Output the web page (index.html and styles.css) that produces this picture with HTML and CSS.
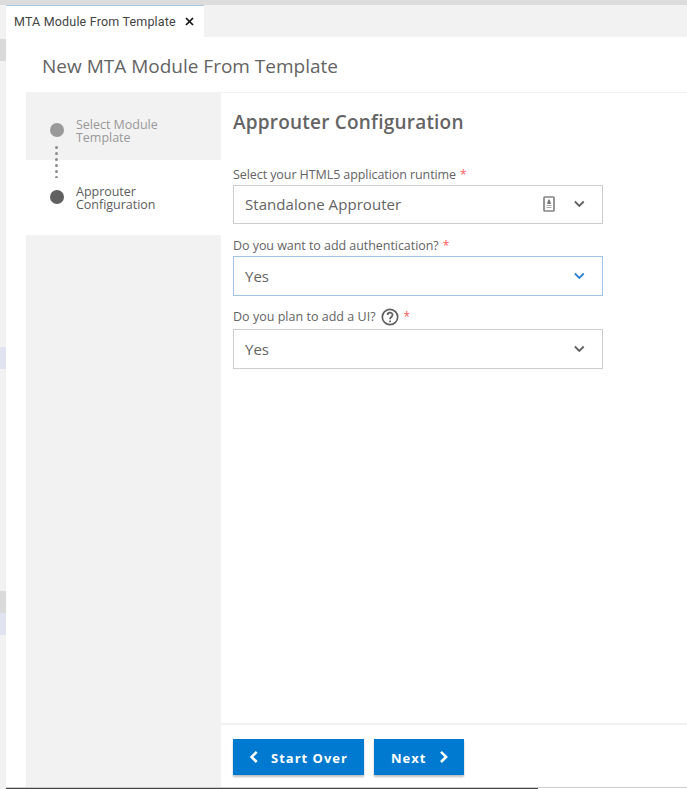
FILE: index.html
```
<!DOCTYPE html>
<html lang="en">
<head>
<meta charset="utf-8">
<title>New MTA Module From Template</title>
<link rel="stylesheet" href="styles.css">
</head>
<body>
<div class="window">
  <div class="top-strip"></div>
  <div class="workbench">
    <div class="gutter"><i class="mark mark-a"></i><i class="mark mark-b"></i><i class="mark mark-c"></i><i class="mark mark-d"></i></div>
    <div class="editor">
      <div class="tabs">
        <div class="tab"><span class="tab-label">MTA Module From Template</span>
          <svg class="close" width="9" height="9" viewBox="0 0 9 9"><path d="M1 1l7 7M8 1l-7 7"/></svg>
        </div>
      </div>
      <h1>New MTA Module From Template</h1>
      <div class="wizard">
        <nav class="steps">
          <div class="step done"><i class="dot"></i><span>Select Module<br>Template</span>
            <svg class="trail" width="5" height="32" viewBox="0 0 5 32"><path d="M2.5 1.5V32"/></svg>
          </div>
          <div class="step active"><i class="dot"></i><span>Approuter<br>Configuration</span></div>
        </nav>
        <main>
          <section class="form">
            <h2>Approuter Configuration</h2>
            <div class="label"><span class="l1">Select your HTML5 application runtime</span><b>*</b></div>
            <div class="select first"><span class="value v1">Standalone Approuter</span>
              <svg class="badge" width="12" height="16" viewBox="0 0 12 16"><rect x="1" y="1" width="10" height="14" rx=".8" fill="#fff" stroke="#858585" stroke-width="1.7"/><path d="M6 3l1.2 2L8 8H4l.8-3z" fill="#777"/><path d="M3.5 9.5h5M3.5 11.5h5" stroke="#aaa"/></svg>
              <svg class="chevron" width="12" height="8" viewBox="0 0 12 8"><path d="M1.9 1.5l4.4 4.4 4.4-4.4"/></svg>
            </div>
            <div class="label second"><span class="l2">Do you want to add authentication?</span><b>*</b></div>
            <div class="select focus"><span class="value">Yes</span>
              <svg class="chevron" width="12" height="8" viewBox="0 0 12 8"><path d="M1.9 1.5l4.4 4.4 4.4-4.4"/></svg>
            </div>
            <div class="label third"><span class="l3">Do you plan to add a UI?</span>
              <svg class="help" width="18" height="18" viewBox="0 0 18 18"><circle cx="9" cy="9" r="7.7"/><path d="M6.5 7.1C6.5 3.8 11.5 3.8 11.5 7c0 2-2.5 2-2.5 4.2M9 12.6v1.7"/></svg><b>*</b></div>
            <div class="select"><span class="value">Yes</span>
              <svg class="chevron" width="12" height="8" viewBox="0 0 12 8"><path d="M1.9 1.5l4.4 4.4 4.4-4.4"/></svg>
            </div>
          </section>
          <footer>
            <button class="back"><svg width="10" height="14" viewBox="0 0 10 14"><path d="M7.7 1.8L2.6 6.9l5.1 5.1"/></svg><span class="b1">Start Over</span></button>
            <button class="next"><span class="b2">Next</span><svg width="10" height="14" viewBox="0 0 10 14"><path d="M2 1.8l5.1 5.1L2 12"/></svg></button>
          </footer>
        </main>
      </div>
      <div class="bottom-line"></div>
    </div>
  </div>
</div>
</body>
</html>
```
FILE: styles.css
```
* { box-sizing: border-box; }
body { margin: 0; background: #fff; color: #646464; font-family: "Open Sans", "Noto Sans", sans-serif; }
.window { width: 687px; height: 789px; display: flex; flex-direction: column; overflow: hidden; }
.top-strip { height: 5px; background: #dcdcdc; }
.workbench { flex: 1; display: flex; min-height: 0; }
.gutter { width: 6px; background: #f2f2f2; display: flex; flex-direction: column; }
.mark { height: 22px; background: #dadada; flex: none; }
.mark-a { margin-top: 34px; }
.mark-b { margin-top: 286px; background: #e1e4f0; }
.mark-c { margin-top: 222px; }
.mark-d { background: #e1e4f0; }
.editor { flex: 1; display: flex; flex-direction: column; min-width: 0; }
.tabs { height: 32px; background: #f2f2f2; display: flex; }
.tab { width: 198px; background: #fff; border-top: 1px solid #a9c8e2; display: flex; align-items: center; padding-left: 8px; font: 12px/16px Roboto, "Liberation Sans", sans-serif; color: #444; }
.tab-label { width: 171px; white-space: nowrap; font-size: 12.5px; letter-spacing: .18px; }
.close { fill: none; stroke: #111; stroke-width: 1.7; }
h1 { margin: 0; height: 55px; padding: 15px 0 0 36px; font-size: 19px; line-height: 28px; font-weight: 400; white-space: nowrap; }
.wizard { flex: 1; display: flex; margin-left: 20px; min-height: 0; }
.steps { width: 195px; background: #f2f2f2; }
.step { position: relative; display: flex; padding-left: 24px; font-size: 12.5px; line-height: 13px; letter-spacing: -.02px; white-space: nowrap; }
.step.done { height: 68px; padding-top: 26px; color: #999; }
.step.active { height: 75px; padding-top: 25px; background: #fff; color: #5d5d5d; }
.dot { width: 14px; height: 14px; margin: 5px 12px 0 0; border-radius: 50%; background: #999; }
.active .dot { background: #606060; }
.trail { position: absolute; left: 28px; top: 54px; z-index: 1; fill: none; stroke: #8b8b8b; stroke-width: 3; stroke-linecap: round; stroke-dasharray: 0 6; }
main { flex: 1; display: flex; flex-direction: column; border-top: 1px solid #f2f2f2; }
.form { flex: 1; padding-left: 12px; }
h2 { margin: 0; height: 72px; padding-top: 15px; font-size: 19px; line-height: 28px; font-weight: 600; letter-spacing: .21px; white-space: nowrap; }
.label { height: 20px; padding-top: 1px; display: flex; font-size: 12.5px; line-height: 18px; white-space: nowrap; }
.label b { color: #ff5c5c; font-size: 12px; font-weight: 400; margin-left: 4px; }
.label .help + b { margin-left: 5px; }
.l1 { letter-spacing: -.08px; }
.l2 { letter-spacing: -.05px; }
.l3 { letter-spacing: .02px; }
.label.second { margin-top: 12px; }
.label.third { height: 22px; margin-top: 11px; }
.help { margin: 0 0 0 5px; fill: none; stroke: #5f5f5f; stroke-width: 1.7; }
.select { width: 370px; height: 40px; border: 1px solid #cdcdcd; display: flex; align-items: center; padding: 0 17px 0 11px; font-size: 15px; white-space: nowrap; }
.select.first { height: 39px; padding-bottom: 1px; }
.select.focus { border-color: #a1c4e5; }
.value { flex: 1; line-height: 22px; }
.v1 { letter-spacing: .06px; }
.badge { margin-right: 18px; }
.chevron { fill: none; stroke: #606060; stroke-width: 1.8; margin-top: -1px; }
.focus .chevron { stroke: #2c80d3; }
footer { height: 64px; border-top: 2px solid #f2f2f2; padding: 14px 0 0 12px; display: flex; gap: 10px; }
button { height: 36px; border: 0; padding: 0; background: #007ad0; color: #fff; font: 700 13px/18px "Open Sans", sans-serif; display: flex; align-items: center; white-space: nowrap; box-shadow: 0 2px 2px rgba(0,0,0,.26); }
button svg { fill: none; stroke: #fff; stroke-width: 2.6; }
.back { width: 131px; padding-left: 16px; gap: 12px; }
.next { width: 90px; padding: 0 15px 0 17px; justify-content: space-between; }
.b1, .b2 { letter-spacing: 1px; padding-top: 2px; }
.bottom-line { height: 2px; border-top: 1px solid #ccc; background: linear-gradient(#444, #444) 0 0 / 532px 1px no-repeat; }
```
